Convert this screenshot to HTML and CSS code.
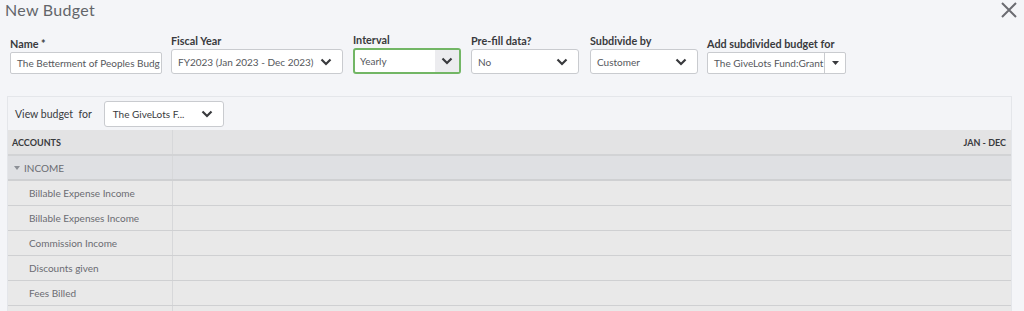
FILE: index.html
```html
<!DOCTYPE html>
<html>
<head>
<meta charset="utf-8">
<link rel="stylesheet" href="styles.css">
</head>
<body>
<div class="topbar">
  <h1 class="title">New Budget</h1>
  <svg class="close" width="16" height="16" viewBox="0 0 16 16"><path d="M1 1L15 15M15 1L1 15" stroke="#6b6c72" stroke-width="2" fill="none"/></svg>
</div>
<div class="fields">
  <div class="field f-name">
    <label>Name *</label>
    <div class="input">The Betterment of Peoples Budg</div>
  </div>
  <div class="field f-fy">
    <label>Fiscal Year</label>
    <div class="select"><span>FY2023 (Jan 2023 - Dec 2023)</span><svg class="chev" width="12" height="8" viewBox="0 0 12 8"><path d="M1.5 1.5L6 6L10.5 1.5" stroke="#393a3d" stroke-width="2.2" fill="none"/></svg></div>
  </div>
  <div class="field f-int">
    <label>Interval</label>
    <div class="select focus"><span>Yearly</span><span class="btn"><svg class="chev" width="12" height="8" viewBox="0 0 12 8"><path d="M1.5 1.5L6 6L10.5 1.5" stroke="#393a3d" stroke-width="2.2" fill="none"/></svg></span></div>
  </div>
  <div class="field f-pre">
    <label>Pre-fill data?</label>
    <div class="select"><span>No</span><svg class="chev" width="12" height="8" viewBox="0 0 12 8"><path d="M1.5 1.5L6 6L10.5 1.5" stroke="#393a3d" stroke-width="2.2" fill="none"/></svg></div>
  </div>
  <div class="field f-sub">
    <label>Subdivide by</label>
    <div class="select"><span>Customer</span><svg class="chev" width="12" height="8" viewBox="0 0 12 8"><path d="M1.5 1.5L6 6L10.5 1.5" stroke="#393a3d" stroke-width="2.2" fill="none"/></svg></div>
  </div>
  <div class="field f-add">
    <label>Add subdivided budget for</label>
    <div class="combo"><span class="val">The GiveLots Fund:Grant</span><span class="cbtn"><svg width="7" height="4" viewBox="0 0 7 4"><path d="M0 0H7L3.5 4Z" fill="#393a3d"/></svg></span></div>
  </div>
</div>
<div class="panel">
  <div class="panel-head">
    <span class="vb">View budget&nbsp; for</span>
    <div class="select small"><span>The GiveLots F...</span><svg class="chev" width="12" height="8" viewBox="0 0 12 8"><path d="M1.5 1.5L6 6L10.5 1.5" stroke="#393a3d" stroke-width="2.2" fill="none"/></svg></div>
  </div>
  <div class="table">
    <div class="row head"><div class="c1">ACCOUNTS</div><div class="c2">JAN - DEC</div></div>
    <div class="row group"><div class="c1"><svg class="tri" width="6" height="4" viewBox="0 0 6 4"><path d="M0 0H6L3 4Z" fill="#8d9096"/></svg>INCOME</div><div class="c2"></div></div>
    <div class="row"><div class="c1 ind">Billable Expense Income</div><div class="c2"></div></div>
    <div class="row"><div class="c1 ind">Billable Expenses Income</div><div class="c2"></div></div>
    <div class="row"><div class="c1 ind">Commission Income</div><div class="c2"></div></div>
    <div class="row"><div class="c1 ind">Discounts given</div><div class="c2"></div></div>
    <div class="row"><div class="c1 ind">Fees Billed</div><div class="c2"></div></div>
    <div class="row"><div class="c1 ind"></div><div class="c2"></div></div>
  </div>
</div>
</body>
</html>
```
FILE: styles.css
```css
* { box-sizing: border-box; }
html, body { margin: 0; padding: 0; overflow: hidden; }
body {
  background: #f4f5f8;
  font-family: Lato, "Open Sans", sans-serif;
  color: #393a3d;
  width: 1024px;
  height: 311px;
}
.topbar {
  display: flex;
  justify-content: space-between;
  align-items: flex-start;
  height: 34px;
  padding: 0 7px 0 5px;
}
.title {
  margin: 0;
  font-size: 16px;
  font-weight: 400;
  color: #63656a;
  line-height: 20px;
  letter-spacing: 0.3px;
}
.close { margin-top: 2px; }
.fields {
  display: flex;
  align-items: flex-end;
  padding-left: 10px;
  gap: 10px;
  height: 40px;
}
.field { display: flex; flex-direction: column; }
.field label {
  font-size: 10.8px;
  font-weight: 700;
  color: #393a3d;
  line-height: 13px;
  margin-bottom: 2px;
}
.f-name { width: 152px; margin-right: -1px; }
.f-fy { width: 172px; }
.f-int { width: 108px; }
.f-pre { width: 108px; }
.f-sub { width: 108px; margin-left: 1px; }
.f-add { width: 139px; margin-left: -1px; }
.input {
  height: 22px;
  background: #fff;
  border: 1px solid #c9cbcf;
  border-radius: 2px;
  font-size: 10px;
  line-height: 20px;
  padding-left: 6px;
  color: #55575c;
  white-space: nowrap;
  overflow: hidden;
}
.select {
  height: 25px;
  background: #fff;
  border: 1px solid #c9cbcf;
  border-radius: 3px;
  display: flex;
  align-items: center;
  justify-content: space-between;
  padding: 0 10px 0 6px;
  font-size: 10px;
  color: #55575c;
  white-space: nowrap;
}
.select.focus {
  height: 26px;
  border: 2px solid #72b665;
  padding: 0 0 0 5px;
  overflow: hidden;
  border-radius: 3px;
}
.select.focus .btn {
  display: flex;
  align-items: center;
  justify-content: center;
  width: 24px;
  height: 100%;
  background: #ececef;
}
.combo {
  height: 22px;
  background: #fff;
  border: 1px solid #c9cbcf;
  border-radius: 2px;
  display: flex;
  font-size: 10px;
  color: #55575c;
}
.combo .val {
  flex: 1;
  line-height: 20px;
  padding-left: 6px;
  white-space: nowrap;
  overflow: hidden;
}
.combo .cbtn {
  width: 21px;
  border-left: 1px solid #c9cbcf;
  display: flex;
  align-items: center;
  justify-content: center;
}
.panel {
  margin: 22px 12px 0 7px;
  border: 1px solid #e4e6ea;
  border-bottom: none;
}
.panel-head {
  display: flex;
  align-items: center;
  height: 33px;
  padding-left: 7px;
  gap: 12px;
  background: #f3f4f7;
}
.vb { font-size: 10.5px; color: #393a3d; }
.select.small { width: 120px; height: 26px; padding-left: 8px; color: #393a3d; }
.table { background: #e9e9e9; }
.row {
  display: grid;
  grid-template-columns: 165px 1fr;
  height: 25px;
  border-bottom: 1px solid #cfd0d2;
}
.row .c1 {
  border-right: 1px solid #d7d8da;
  display: flex;
  align-items: center;
  padding-left: 4px;
  font-size: 10px;
  color: #6b6c72;
}
.row .c2 {
  display: flex;
  align-items: center;
  justify-content: flex-end;
  padding-right: 5px;
}
.row.head { background: #e3e3e4; height: 26px; border-bottom: 2px solid #d2d3d5; }
.row.head .c1, .row.head .c2 { font-size: 9px; font-weight: 700; color: #393a3d; }
.row.head .c1 { padding-left: 4px; }
.row.group { background: #dfe0e3; border-bottom: 2px solid #cfd0d2; }
.row.group .c1 { padding-left: 6px; }
.tri { margin-right: 4px; }
.c1.ind { padding-left: 21px; }
```
